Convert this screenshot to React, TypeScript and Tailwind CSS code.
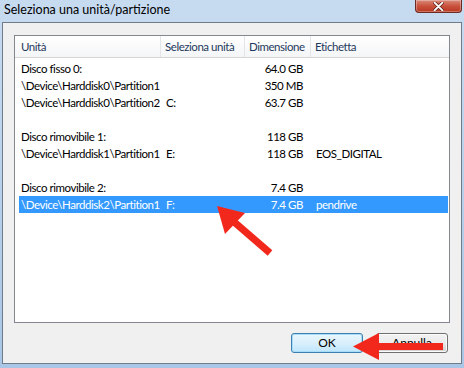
import React from 'react';

type Row = { unit: string; letter?: string; size?: string; label?: string; selected?: boolean };

const rows: Row[] = [
  { unit: 'Disco fisso 0:', size: '64.0 GB' },
  { unit: '\\Device\\Harddisk0\\Partition1', size: '350 MB' },
  { unit: '\\Device\\Harddisk0\\Partition2', letter: 'C:', size: '63.7 GB' },
  { unit: '' },
  { unit: 'Disco rimovibile 1:', size: '118 GB' },
  { unit: '\\Device\\Harddisk1\\Partition1', letter: 'E:', size: '118 GB', label: 'EOS_DIGITAL' },
  { unit: '' },
  { unit: 'Disco rimovibile 2:', size: '7.4 GB' },
  { unit: '\\Device\\Harddisk2\\Partition1', letter: 'F:', size: '7.4 GB', label: 'pendrive', selected: true },
];

function CloseButton() {
  return (
    <div className="mr-[2px] flex h-[13px] w-[47px] items-center justify-center rounded-b-[4px] border border-t-0 border-[#6b2a22] bg-gradient-to-b from-[#d98a7b] via-[#c9523d] to-[#b9361f] shadow-[inset_0_0_0_1px_rgba(255,255,255,0.3)]">
      <svg width="11" height="9" viewBox="0 0 11 9">
        <path d="M1.5 0.5 L9.5 8.5 M9.5 0.5 L1.5 8.5" stroke="#5a1a10" strokeWidth="3.2" strokeLinecap="round" />
        <path d="M1.5 0.5 L9.5 8.5 M9.5 0.5 L1.5 8.5" stroke="#ffffff" strokeWidth="1.8" strokeLinecap="round" />
      </svg>
    </div>
  );
}

function Arrows() {
  return (
    <svg className="pointer-events-none absolute left-0 top-0" width="464" height="368" viewBox="0 0 464 368">
      <g fill="#f3281c">
        <polygon points="217,206 245,213 225,234" />
        <line x1="233" y1="221" x2="270" y2="253" stroke="#f3281c" strokeWidth="7" />
        <polygon points="353,346.5 379,333 379,360" />
        <rect x="376" y="343" width="67" height="7" />
      </g>
    </svg>
  );
}

export default function App() {
  return (
    <div
      className="relative flex h-[368px] w-[464px] flex-col overflow-hidden bg-gradient-to-b from-[#c7dbf0] to-[#a9c6e6] text-[12px] text-black"
      style={{ fontFamily: 'Lato, "Noto Sans", sans-serif' }}
    >
      {/* title bar */}
      <div className="flex h-[22px] shrink-0 items-start justify-between">
        <span className="pl-[4px] pt-[2px] text-[12.5px] leading-[16px] text-black">Seleziona una unità/partizione</span>
        <CloseButton />
      </div>

      {/* client area */}
      <div className="mx-[2px] flex h-[342px] flex-col border border-[#6f7c89] bg-[#f0f0f0] px-[11px] pt-[12px] text-[11.5px] tracking-[-0.45px]">
        <div className="flex h-[288px] flex-col border border-[#828790] bg-white">
          {/* header */}
          <div className="flex h-[22px] w-[434px] whitespace-nowrap border-b border-[#d5d5d5] bg-gradient-to-b from-white to-[#f4f5f7] leading-[21px] text-[#1e395b]">
            <div className="w-[146px] border-r border-[#e3e5e8] pl-[6px]">Unità</div>
            <div className="w-[84px] border-r border-[#e3e5e8] pl-[4px]">Seleziona unità</div>
            <div className="w-[66px] border-r border-[#e3e5e8] pl-[4px]">Dimensione</div>
            <div className="flex-1 pl-[4px]">Etichetta</div>
          </div>

          {/* rows */}
          <div className="flex flex-col pt-[2px]">
            {rows.map((r, i) => (
              <div
                key={i}
                className={`ml-[4px] flex h-[17px] w-[429px] whitespace-nowrap leading-[17px] ${r.selected ? 'bg-[#3399ff] text-white' : ''}`}
              >
                <div className="w-[142px] pl-[2px]">{r.unit}</div>
                <div className="w-[84px] pl-[5px]">{r.letter}</div>
                <div className="w-[66px] pr-[8px] text-right">{r.size}</div>
                <div className="flex-1 pl-[5px]">{r.label}</div>
              </div>
            ))}
          </div>
        </div>

        {/* buttons */}
        <div className="mt-[10px] flex justify-end gap-[13px] pr-[2px] text-[12px] tracking-normal">
          <button className="h-[20px] w-[72px] rounded-[3px] border border-[#3c7fb1] bg-gradient-to-b from-[#eaf6fd] via-[#d9f0fc] to-[#bee6fd] leading-[18px] shadow-[inset_0_0_0_1px_#a8dcf7]">
            OK
          </button>
          <button className="h-[20px] w-[72px] rounded-[3px] border border-[#707070] bg-gradient-to-b from-[#f2f2f2] via-[#ebebeb] to-[#cfcfcf] leading-[18px] shadow-[inset_0_0_0_1px_#fcfcfc]">
            Annulla
          </button>
        </div>
      </div>

      <Arrows />
    </div>
  );
}
